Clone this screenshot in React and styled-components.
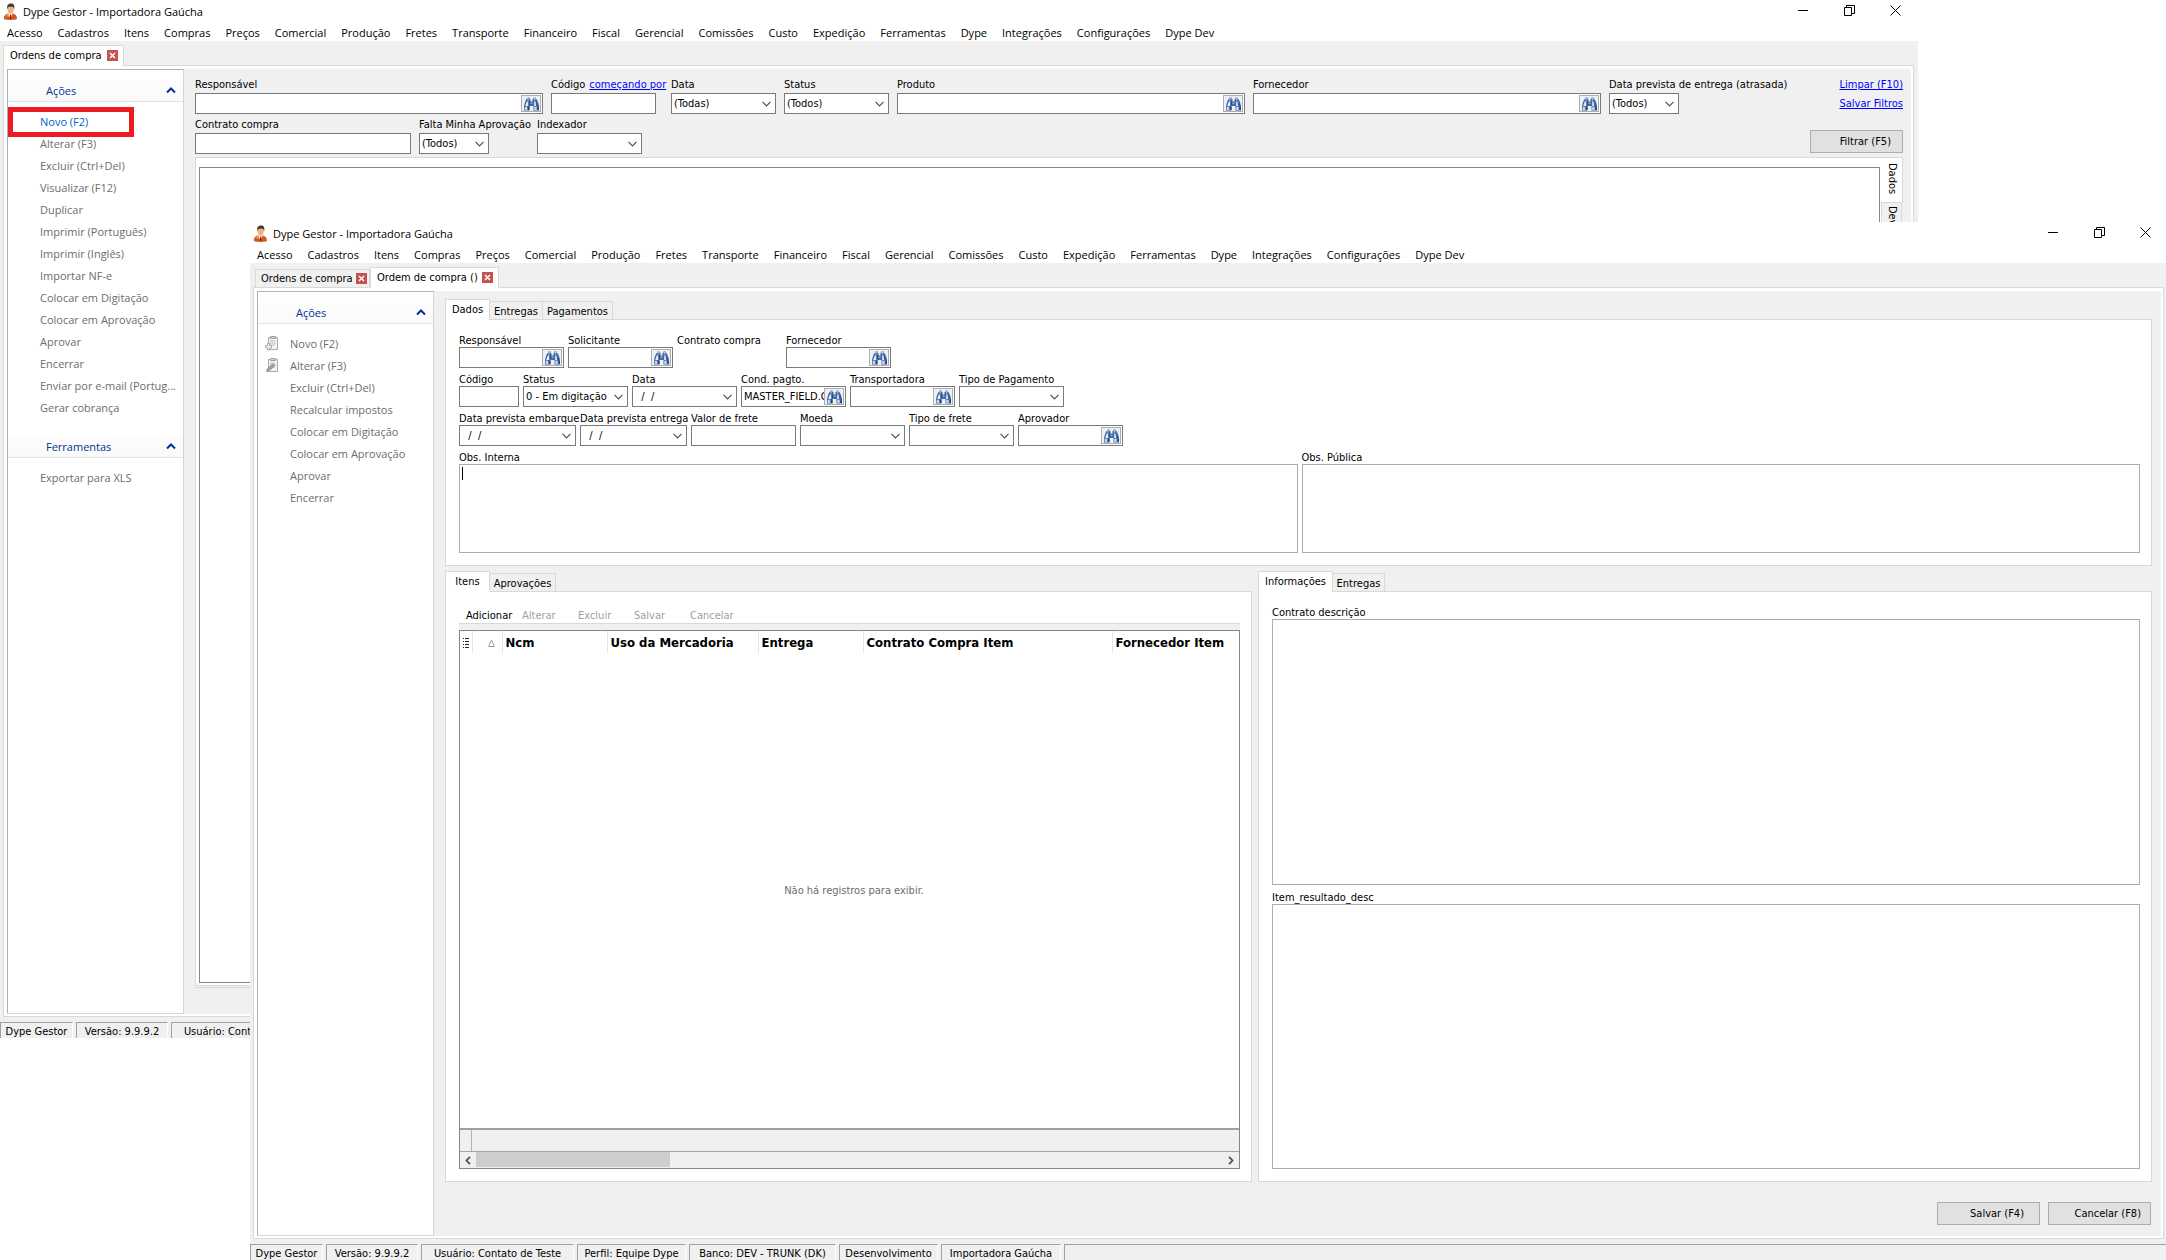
import { useId } from 'react';
import styled, { createGlobalStyle } from 'styled-components';

const tahoma = "'DejaVu Sans Condensed', 'Liberation Sans', sans-serif";
const segoe = "'Open Sans', 'Noto Sans', sans-serif";

const GlobalStyle = createGlobalStyle`
  * { box-sizing: border-box; }
  body {
    margin: 0;
    background: #fff;
    color: #000;
    font-family: ${tahoma};
    font-size: 11px;
    line-height: 13px;
  }
  button, input, select, textarea {
    margin: 0;
    padding: 0;
    border: 0;
    border-radius: 0;
    background: none;
    color: inherit;
    font: inherit;
    outline: none;
  }
`;

const Desktop = styled.main`
  position: relative;
  min-height: 100vh;
  overflow: hidden;
`;

const Window = styled.section`
  position: absolute;
  display: flex;
  flex-direction: column;
  background: #f0f0f0;
  overflow: hidden;
`;

const BackWindow = styled(Window)`
  top: 0;
  left: 0;
  right: 248px;
  bottom: 222px;
`;

const FrontWindow = styled(Window)`
  top: 222px;
  left: 250px;
  right: -2px;
  bottom: 0;
`;

const TitleBar = styled.header`
  display: flex;
  align-items: center;
  height: 24px;
  padding: 0 0 2px 3px;
  background: #fff;
  font-family: ${segoe};
`;

const Title = styled.h1`
  flex: 1;
  margin: 0 0 0 5px;
  font-size: 11px;
  font-weight: 400;
`;

const WindowButton = styled.button`
  display: flex;
  justify-content: center;
  width: 46px;
  padding-bottom: 2px;
`;

const MenuBar = styled.nav`
  display: flex;
  gap: 15px;
  height: 17px;
  padding-left: 7px;
  background: #fff;
  font-family: ${segoe};

  button {
    white-space: nowrap;
  }
`;

const WindowTabs = styled.div`
  display: flex;
  align-items: flex-end;
  height: 24px;
  padding-left: ${({ $inset }) => ($inset ? 5 : 3)}px;
`;

const WindowTab = styled.div`
  display: flex;
  align-items: center;
  justify-content: space-between;
  height: ${({ $active }) => ($active ? 21 : 18)}px;
  width: ${({ $width }) => $width}px;
  margin-bottom: ${({ $active }) => ($active ? -1 : 0)}px;
  padding: ${({ $active }) => ($active ? '0 5px 2px 6px' : '0 2px 0 5px')};
  border: 1px solid #d9d9d9;
  border-bottom: 0;
  background: ${({ $active }) => ($active ? '#fff' : '#f0f0f0')};
  z-index: 1;
`;

const CloseTab = styled.button`
  display: flex;
  align-items: center;
  justify-content: center;
  width: 11px;
  height: 11px;
  background: #c75050;
`;

const PageFrame = styled.div`
  flex: 1;
  display: flex;
  min-height: 0;
  margin: 0 4px 5px 3px;
  padding: 3px 2px 2px 3px;
  border: 1px solid #d9d9d9;
  background: #fff;
`;

const Sidebar = styled.aside`
  flex: 0 0 177px;
  padding-top: 10px;
  border: 1px solid #cbd8e3;
  border-top-color: #a3b4c0;
  border-left-color: #a3b4c0;
  font-family: ${segoe};
`;

const GroupHeader = styled.h2`
  display: flex;
  align-items: center;
  justify-content: space-between;
  height: 22px;
  margin: 0;
  padding: 0 7px 0 38px;
  border-bottom: 1px solid #e3e3e3;
  background: linear-gradient(#fdfdfd, #fafafa);
  color: #039;
  font-size: 11px;
  font-weight: 400;
`;

const Actions = styled.ul`
  list-style: none;
  margin: 0 0 18px;
  padding: 8px 0 0;
`;

const Action = styled.li`
  position: relative;
  display: flex;
  align-items: center;
  height: 22px;
  padding-left: 7px;
  color: ${({ $current }) => ($current ? '#0066cc' : '#6d6d6d')};

  button {
    white-space: nowrap;
  }
`;

const IconSlot = styled.span`
  display: flex;
  width: 25px;
`;

const Highlight = styled.span`
  position: absolute;
  top: -3px;
  left: 0;
  width: 126px;
  height: 30px;
  border: 5px solid #ed1c24;
  pointer-events: none;
`;

const Content = styled.div`
  flex: 1;
  display: flex;
  flex-direction: column;
  min-width: 0;
  padding: ${({ $top }) => $top}px ${({ $right }) => $right}px 0 11px;
  background: #f0f0f0;
`;

const Filters = styled.form`
  display: flex;
  justify-content: space-between;
  height: 79px;
`;

const Fields = styled.div`
  display: flex;
  flex-direction: column;
  gap: ${({ $gap }) => $gap}px;
`;

const FieldRow = styled.div`
  display: flex;
  gap: ${({ $gap }) => $gap}px;
`;

const FieldBox = styled.div`
  display: flex;
  flex-direction: column;
  gap: ${({ $loose }) => ($loose ? 2 : 0)}px;
  width: ${({ $width }) => $width}px;

  label {
    height: 13px;
    white-space: nowrap;
  }
`;

const LabelLine = styled.div`
  display: flex;
  gap: 4px;
`;

const Link = styled.a`
  color: #00f;
  white-space: nowrap;
`;

const Control = styled.div`
  display: flex;
  align-items: center;
  width: ${({ $width }) => $width}px;
  height: 21px;
  padding-right: 1px;
  border: 1px solid #7a7a7a;
  background: #fff;

  input, select {
    flex: 1;
    width: 0;
    height: 17px;
    padding-left: 2px;
    appearance: none;
    white-space: pre;
  }

  svg {
    flex: none;
  }
`;

const DropArrow = styled.span`
  display: flex;
  justify-content: center;
  width: 15px;
  pointer-events: none;
`;

const LookupButton = styled.button`
  display: flex;
  align-items: center;
  justify-content: center;
  width: 20px;
  height: 17px;
  border: 1px solid #adadad;
  background: #f0f0f3;
`;

const FilterLinks = styled.div`
  display: flex;
  flex-direction: column;
  align-items: flex-end;
  gap: 6px;
`;

const PushButton = styled.button`
  width: ${({ $width }) => $width}px;
  height: 23px;
  margin-top: ${({ $spaced }) => ($spaced ? 14 : 0)}px;
  padding-right: ${({ $right }) => $right}px;
  border: 1px solid #adadad;
  background: #e1e1e1;
  text-align: right;
`;

const ResultArea = styled.div`
  flex: 1;
  display: flex;
  margin-bottom: 26px;
  padding-bottom: 1px;
  border: 1px solid #d9d9d9;
  border-width: 1px 0;
`;

const ResultPanel = styled.div`
  flex: 1;
  display: flex;
  padding: 9px 1px 2px 3px;
  border: 1px solid #d9d9d9;
  border-width: 0 0 1px 1px;
  background: #fff;
`;

const ResultGrid = styled.div`
  flex: 1;
  border: 1px solid #828790;
`;

const SideTabs = styled.div`
  display: flex;
  flex-direction: column;
  width: 22px;
`;

const SideTab = styled.button`
  width: ${({ $active }) => ($active ? 22 : 21)}px;
  height: 45px;
  padding: ${({ $active }) => ($active ? 5 : 3)}px 0 0 2px;
  border: 1px solid #d9d9d9;
  border-top: 0;
  border-left: ${({ $active }) => ($active ? 0 : 1)}px solid #d9d9d9;
  background: ${({ $active }) => ($active ? '#fff' : '#f0f0f0')};
  writing-mode: vertical-rl;
  text-align: left;
`;

const TabStrip = styled.div`
  display: flex;
  align-items: flex-end;
  height: 20px;
`;

const Tab = styled.button`
  height: ${({ $active }) => ($active ? 21 : 18)}px;
  width: ${({ $width }) => $width}px;
  margin-bottom: ${({ $active }) => ($active ? -1 : 0)}px;
  padding: ${({ $active }) => ($active ? '0 0 2px' : '1px 0 0')};
  border: 1px solid #d9d9d9;
  border-left-width: ${({ $active }) => ($active ? 1 : 0)}px;
  border-bottom: 0;
  background: ${({ $active }) => ($active ? '#fff' : '#f0f0f0')};
  z-index: 1;
`;

const TabPanel = styled.div`
  flex: ${({ $fill }) => ($fill ? '1' : 'none')};
  display: flex;
  flex-direction: column;
  padding: 14px 11px 12px 13px;
  border: 1px solid #d9d9d9;
  background: #fff;
`;

const NotesRow = styled.div`
  display: flex;
  gap: 4px;
  margin-top: 5px;
`;

const InfoFields = styled.div`
  flex: 1;
  display: flex;
  flex-direction: column;
  gap: 6px;
`;

const Memo = styled.div`
  position: relative;
  flex: 1;
  display: flex;
  flex-direction: column;

  textarea {
    flex: 1;
    width: 100%;
    min-height: 89px;
    border: 1px solid #abadb3;
    background: #fff;
    resize: none;
  }
`;

const Caret = styled.span`
  position: absolute;
  top: 16px;
  left: 3px;
  width: 1px;
  height: 13px;
  background: #000;
`;

const Split = styled.div`
  flex: 1;
  display: grid;
  grid-template-columns: 807fr 894fr;
  gap: 6px;
  margin-top: 5px;
`;

const Pane = styled.div`
  display: flex;
  flex-direction: column;
  min-width: 0;
`;

const Toolbar = styled.div`
  display: flex;
  height: 18px;
  padding-left: 7px;
  border-bottom: 1px solid #d9d9d9;
`;

const ToolButton = styled.button`
  width: 56px;
  height: 18px;
  text-align: left;

  &:disabled {
    color: #a0a0a0;
  }
`;

const GridBand = styled.div`
  height: 6px;
  background: #f0f0f0;
`;

const ItemGrid = styled.div`
  flex: 1;
  display: flex;
  flex-direction: column;
  border: 1px solid #828790;
`;

const ItemTable = styled.table`
  width: 100%;
  border-collapse: collapse;
  table-layout: fixed;

  th {
    height: 22px;
    padding: 1px 0 0 3px;
    border-right: 1px solid #e5e5e5;
    font-size: 13px;
    font-weight: 700;
    line-height: 20px;
    text-align: left;
    white-space: nowrap;
  }

  th:last-child {
    border-right: 0;
  }

  th svg {
    display: block;
  }

  th:nth-child(2) {
    padding-left: 15px;
  }
`;

const EmptyMessage = styled.p`
  flex: 1;
  display: flex;
  align-items: center;
  justify-content: center;
  margin: 0;
  padding-left: 9px;
  color: #6d6d6d;
`;

const SummaryRow = styled.div`
  height: 24px;
  padding-left: 11px;
  border-top: 2px solid #a0a0a0;
  border-bottom: 1px solid #a5a5a5;
  background: #f0f0f0;

  span {
    display: block;
    width: 1px;
    height: 21px;
    background: #b4b4b4;
  }
`;

const ScrollBar = styled.div`
  display: flex;
  height: 16px;
  background: #f0f0f0;

  button {
    display: flex;
    align-items: center;
    justify-content: center;
    width: 16px;
  }
`;

const Track = styled.div`
  flex: 1;
`;

const Thumb = styled.div`
  width: 26%;
  height: 15px;
  background: #cdcdcd;
`;

const FormButtons = styled.div`
  display: flex;
  justify-content: flex-end;
  gap: 8px;
  padding: 20px 1px 11px 0;
`;

const StatusBar = styled.footer`
  display: flex;
  gap: 3px;
  height: 16px;
`;

const StatusPanel = styled.div`
  flex: ${({ $width }) => ($width ? `0 0 ${$width}px` : '1')};
  padding-top: 2px;
  border: 1px solid #a0a0a0;
  border-right-color: #fff;
  border-bottom: 0;
  text-align: center;
  white-space: nowrap;
`;

function PersonIcon() {
  return (
    <svg width="15" height="17" viewBox="0 0 15 17" aria-hidden="true">
      <path d="M1 16c-.6-3 1.200-5 4.500-5.700h3.500c3.500.7 5.300 2.700 4.900 5.700-3 1.200-10 1.200-12.900 0z" fill="#d9541e" />
      <path d="M2 13.500c1-2 2.500-2.800 4-3l1.500 3z" fill="#f28b45" />
      <path d="M5.500 10.200h4l-.7 3.500-1.300 1.800-1.500-2z" fill="#fff" />
      <path d="M7 11.500h1.200l.6 3.500-1.200 1.300-1.100-1.300z" fill="#8d1f12" />
      <ellipse cx="7.700" cy="6.300" rx="3.100" ry="4.200" fill="#eab684" />
      <path d="M4.400 6.500C3.600 2.500 5 .6 7.800.5c3 0 4.200 2 3.300 5.900-.3-1.700-.8-2.500-1.600-2.900-1.700.5-3.200.4-4 .2-.6.800-.8 1.600-1.100 2.800z" fill="#46362c" />
    </svg>
  );
}

function Binoculars() {
  return (
    <svg width="17" height="14" viewBox="0 0 17 14" aria-hidden="true">
      <path d="M3.500 2h1V.5h2V2h1v2.500h2V2h1V.5h2V2h1l1.500 3 1 4v4.500h-5.500v-4.500h-4v4.500H1V9l1-4z" fill="#4469a8" />
      <path d="M4.500 1h1.200v2.500H4.500zM11 1h1.200v2.500H11z" fill="#a8c0e2" />
      <path d="M3.800 4.500h1.400V9H2.200zM11.200 4.500h1.300l.6 4.500h-1.900z" fill="#e3eefb" />
      <path d="M1.700 9.800h2.500V13H1.700zM11.200 9.800h2.500V13h-2.500z" fill="#c5d7f0" />
      <path d="M5 9.500h1.500V13H5zM14.500 9.500H16V13h-1.500zM6 4.500h1V8H6zM13.500 4.500l1.500 4h-1z" fill="#24467f" />
      <path d="M7.500 5.500h2V7h-2z" fill="#8faad4" />
    </svg>
  );
}

function Chevron() {
  return (
    <svg width="9" height="6" viewBox="0 0 9 6" aria-hidden="true">
      <path d="M.5.800l4 4 4-4" fill="none" stroke="#505050" strokeWidth="1.200" />
    </svg>
  );
}

function CollapseIcon() {
  return (
    <svg width="10" height="7" viewBox="0 0 10 7" aria-hidden="true">
      <path d="M1 5.500l4-4 4 4" fill="none" stroke="#039" strokeWidth="2" />
    </svg>
  );
}

function ClipboardIcon({ kind }) {
  return (
    <svg width="14" height="16" viewBox="0 0 14 16" aria-hidden="true">
      <path d="M3.500 2.500h9v12h-9z" fill="#f4f4f4" stroke="#a9a9a9" />
      <path d="M5.500 1.500h5v2h-5z" fill="#d5d5d5" stroke="#a0a0a0" />
      <path d="M5 6h5M5 8h6M5 10h5" stroke="#bcbcbc" />
      {kind === 'add' ? (
        <path d="M2.500 8.500h2v2h2v2.500h-2v2h-2v-2H.5v-2.500h2z" fill="#eee" stroke="#a9a9a9" />
      ) : (
        <path d="M1.500 14.500l1-3L8 7l2 1.500-5.500 5z" fill="#a6a6a6" stroke="#8f8f8f" />
      )}
    </svg>
  );
}

function ScrollArrow({ right }) {
  return (
    <svg width="6" height="9" viewBox="0 0 6 9" aria-hidden="true">
      <path d={right ? 'M1 .8l3.500 3.700L1 8.200' : 'M5 .8L1.500 4.500 5 8.200'} fill="none" stroke="#505050" strokeWidth="1.800" />
    </svg>
  );
}

const menus = [
  'Acesso', 'Cadastros', 'Itens', 'Compras', 'Preços', 'Comercial', 'Produção', 'Fretes',
  'Transporte', 'Financeiro', 'Fiscal', 'Gerencial', 'Comissões', 'Custo', 'Expedição',
  'Ferramentas', 'Dype', 'Integrações', 'Configurações', 'Dype Dev',
];

const listActions = [
  { text: 'Novo (F2)', current: true },
  { text: 'Alterar (F3)' },
  { text: 'Excluir (Ctrl+Del)' },
  { text: 'Visualizar (F12)' },
  { text: 'Duplicar' },
  { text: 'Imprimir (Português)' },
  { text: 'Imprimir (Inglês)' },
  { text: 'Importar NF-e' },
  { text: 'Colocar em Digitação' },
  { text: 'Colocar em Aprovação' },
  { text: 'Aprovar' },
  { text: 'Encerrar' },
  { text: 'Enviar por e-mail (Portug...' },
  { text: 'Gerar cobrança' },
];

const orderActions = [
  { text: 'Novo (F2)', icon: 'add' },
  { text: 'Alterar (F3)', icon: 'edit' },
  { text: 'Excluir (Ctrl+Del)' },
  { text: 'Recalcular impostos' },
  { text: 'Colocar em Digitação' },
  { text: 'Colocar em Aprovação' },
  { text: 'Aprovar' },
  { text: 'Encerrar' },
];

const statusPanels = [
  ['Dype Gestor', 73],
  ['Versão: 9.9.9.2', 92],
  ['Usuário: Contato de Teste', 153],
  ['Perfil: Equipe Dype', 109],
  ['Banco: DEV - TRUNK (DK)', 147],
  ['Desenvolvimento', 99],
  ['Importadora Gaúcha', 120],
  ['', 0],
];

function WindowHead() {
  return (
    <>
      <TitleBar>
        <PersonIcon />
        <Title>Dype Gestor - Importadora Gaúcha</Title>
        <WindowButton aria-label="Minimizar">
          <svg width="10" height="11"><path d="M0 5.500h10" stroke="#000" /></svg>
        </WindowButton>
        <WindowButton aria-label="Restaurar">
          <svg width="11" height="11">
            <path d="M.5 2.500h7v8h-7zM2.500 2.500v-2h8v8h-3" fill="none" stroke="#000" />
          </svg>
        </WindowButton>
        <WindowButton aria-label="Fechar">
          <svg width="11" height="11"><path d="M.5.500l10 10M10.500.500l-10 10" stroke="#000" /></svg>
        </WindowButton>
      </TitleBar>
      <MenuBar>
        {menus.map((menu) => (
          <button key={menu} type="button">{menu}</button>
        ))}
      </MenuBar>
    </>
  );
}

function PageTab({ text, active, width }) {
  return (
    <WindowTab $active={active} $width={width}>
      <button type="button">{text}</button>
      <CloseTab type="button" aria-label="Fechar aba">
        <svg width="7" height="7"><path d="M1 1l5 5M6 1L1 6" stroke="#fff" strokeWidth="1.500" /></svg>
      </CloseTab>
    </WindowTab>
  );
}

function ActionGroup({ title, actions }) {
  return (
    <>
      <GroupHeader>
        {title}
        <CollapseIcon />
      </GroupHeader>
      <Actions>
        {actions.map(({ text, current, icon }) => (
          <Action key={text} $current={current}>
            <IconSlot>{icon && <ClipboardIcon kind={icon} />}</IconSlot>
            <button type="button">{text}</button>
            {current && <Highlight />}
          </Action>
        ))}
      </Actions>
    </>
  );
}

function Field({ label, type = 'text', width = 105, box = width, loose, value = '', link }) {
  const id = useId();
  return (
    <FieldBox $loose={loose} $width={box}>
      <LabelLine>
        <label htmlFor={id}>{label}</label>
        {link && <Link href="#codigo">{link}</Link>}
      </LabelLine>
      {type !== 'none' && (
        <Control $width={width}>
          {type === 'select' ? (
            <select id={id} defaultValue={value}>
              <option>{value}</option>
            </select>
          ) : (
            <input id={id} defaultValue={value} />
          )}
          {(type === 'select' || type === 'date') && <DropArrow><Chevron /></DropArrow>}
          {type === 'lookup' && (
            <LookupButton type="button" aria-label={`Buscar ${label}`}><Binoculars /></LookupButton>
          )}
        </Control>
      )}
    </FieldBox>
  );
}

function MemoField({ label, caret }) {
  const id = useId();
  return (
    <Memo>
      <label htmlFor={id}>{label}</label>
      <textarea id={id} />
      {caret && <Caret />}
    </Memo>
  );
}

function Tabs({ tabs }) {
  return (
    <TabStrip role="tablist">
      {tabs.map(([text, width], i) => (
        <Tab key={text} type="button" role="tab" aria-selected={i === 0} $active={i === 0} $width={width}>
          {text}
        </Tab>
      ))}
    </TabStrip>
  );
}

function Status() {
  return (
    <StatusBar>
      {statusPanels.map(([text, width]) => (
        <StatusPanel key={text} $width={width}>{text}</StatusPanel>
      ))}
    </StatusBar>
  );
}

function OrderList() {
  return (
    <BackWindow>
      <WindowHead />
      <WindowTabs>
        <PageTab text="Ordens de compra" width={121} active />
      </WindowTabs>
      <PageFrame>
        <Sidebar>
          <ActionGroup title="Ações" actions={listActions} />
          <ActionGroup title="Ferramentas" actions={[{ text: 'Exportar para XLS' }]} />
        </Sidebar>
        <Content $top={9} $right={8}>
          <Filters>
            <Fields $gap={4}>
              <FieldRow $gap={8}>
                <Field loose label="Responsável" type="lookup" width={348} />
                <Field loose label="Código" box={112} link="começando por" />
                <Field loose label="Data" type="select" value="(Todas)" />
                <Field loose label="Status" type="select" value="(Todos)" />
                <Field loose label="Produto" type="lookup" width={348} />
                <Field loose label="Fornecedor" type="lookup" width={348} />
                <Field loose label="Data prevista de entrega (atrasada)" type="select" width={70} value="(Todos)" />
              </FieldRow>
              <FieldRow $gap={8}>
                <Field loose label="Contrato compra" width={216} />
                <Field loose label="Falta Minha Aprovação" type="select" width={70} box={110} value="(Todos)" />
                <Field loose label="Indexador" type="select" />
              </FieldRow>
            </Fields>
            <FilterLinks>
              <Link href="#limpar">Limpar (F10)</Link>
              <Link href="#salvar">Salvar Filtros</Link>
              <PushButton type="button" $width={93} $right={11} $spaced>Filtrar (F5)</PushButton>
            </FilterLinks>
          </Filters>
          <ResultArea>
            <ResultPanel>
              <ResultGrid />
            </ResultPanel>
            <SideTabs>
              <SideTab type="button" $active>Dados</SideTab>
              <SideTab type="button">Dev</SideTab>
            </SideTabs>
          </ResultArea>
        </Content>
      </PageFrame>
      <Status />
    </BackWindow>
  );
}

function OrderForm() {
  return (
    <FrontWindow>
      <WindowHead />
      <WindowTabs $inset>
        <PageTab text="Ordens de compra" width={115} />
        <PageTab text="Ordem de compra ()" width={129} active />
      </WindowTabs>
      <PageFrame>
        <Sidebar>
          <ActionGroup title="Ações" actions={orderActions} />
        </Sidebar>
        <Content $top={8} $right={9}>
          <Tabs tabs={[['Dados', 45], ['Entregas', 53], ['Pagamentos', 70]]} />
          <TabPanel>
            <Fields $gap={5}>
              <FieldRow $gap={4}>
                <Field label="Responsável" type="lookup" />
                <Field label="Solicitante" type="lookup" />
                <Field label="Contrato compra" type="none" />
                <Field label="Fornecedor" type="lookup" />
              </FieldRow>
              <FieldRow $gap={4}>
                <Field label="Código" width={60} />
                <Field label="Status" type="select" value="0 - Em digitação" />
                <Field label="Data" type="date" value="  /  /" />
                <Field label="Cond. pagto." type="lookup" value="MASTER_FIELD.COD" />
                <Field label="Transportadora" type="lookup" />
                <Field label="Tipo de Pagamento" type="select" />
              </FieldRow>
              <FieldRow $gap={4}>
                <Field label="Data prevista embarque" type="date" width={117} value="  /  /" />
                <Field label="Data prevista entrega" type="date" width={107} value="  /  /" />
                <Field label="Valor de frete" />
                <Field label="Moeda" type="select" />
                <Field label="Tipo de frete" type="select" />
                <Field label="Aprovador" type="lookup" />
              </FieldRow>
            </Fields>
            <NotesRow>
              <MemoField label="Obs. Interna" caret />
              <MemoField label="Obs. Pública" />
            </NotesRow>
          </TabPanel>
          <Split>
            <Pane>
              <Tabs tabs={[['Itens', 45], ['Aprovações', 66]]} />
              <TabPanel $fill>
                <Toolbar>
                  <ToolButton type="button">Adicionar</ToolButton>
                  <ToolButton type="button" disabled>Alterar</ToolButton>
                  <ToolButton type="button" disabled>Excluir</ToolButton>
                  <ToolButton type="button" disabled>Salvar</ToolButton>
                  <ToolButton type="button" disabled>Cancelar</ToolButton>
                </Toolbar>
                <GridBand />
                <ItemGrid>
                  <ItemTable>
                    <colgroup>
                      <col width="12" />
                      <col width="30" />
                      <col width="105" />
                      <col width="151" />
                      <col width="105" />
                      <col width="249" />
                      <col />
                    </colgroup>
                    <thead>
                      <tr>
                        <th aria-label="Colunas">
                          <svg width="7" height="10">
                            <path d="M0 .5h1M2 .5h4M0 3.500h1M2 3.500h4M0 6.500h1M2 6.500h4M0 9.500h1M2 9.500h4" stroke="#222" />
                          </svg>
                        </th>
                        <th aria-label="Ordem">
                          <svg width="7" height="8"><path d="M3.500 1L.6 7.500h5.800z" fill="none" stroke="#a0a0a0" /></svg>
                        </th>
                        <th>Ncm</th>
                        <th>Uso da Mercadoria</th>
                        <th>Entrega</th>
                        <th>Contrato Compra Item</th>
                        <th>Fornecedor Item</th>
                      </tr>
                    </thead>
                  </ItemTable>
                  <EmptyMessage>Não há registros para exibir.</EmptyMessage>
                  <SummaryRow><span /></SummaryRow>
                  <ScrollBar>
                    <button type="button" aria-label="Rolar para a esquerda"><ScrollArrow /></button>
                    <Track><Thumb /></Track>
                    <button type="button" aria-label="Rolar para a direita"><ScrollArrow right /></button>
                  </ScrollBar>
                </ItemGrid>
              </TabPanel>
            </Pane>
            <Pane>
              <Tabs tabs={[['Informações', 75], ['Entregas', 52]]} />
              <TabPanel $fill>
                <InfoFields>
                  <MemoField label="Contrato descrição" />
                  <MemoField label="Item_resultado_desc" />
                </InfoFields>
              </TabPanel>
            </Pane>
          </Split>
          <FormButtons>
            <PushButton type="button" $width={103} $right={15}>Salvar (F4)</PushButton>
            <PushButton type="button" $width={103} $right={9}>Cancelar (F8)</PushButton>
          </FormButtons>
        </Content>
      </PageFrame>
      <Status />
    </FrontWindow>
  );
}

export default function App() {
  return (
    <>
      <GlobalStyle />
      <Desktop>
        <OrderList />
        <OrderForm />
      </Desktop>
    </>
  );
}
